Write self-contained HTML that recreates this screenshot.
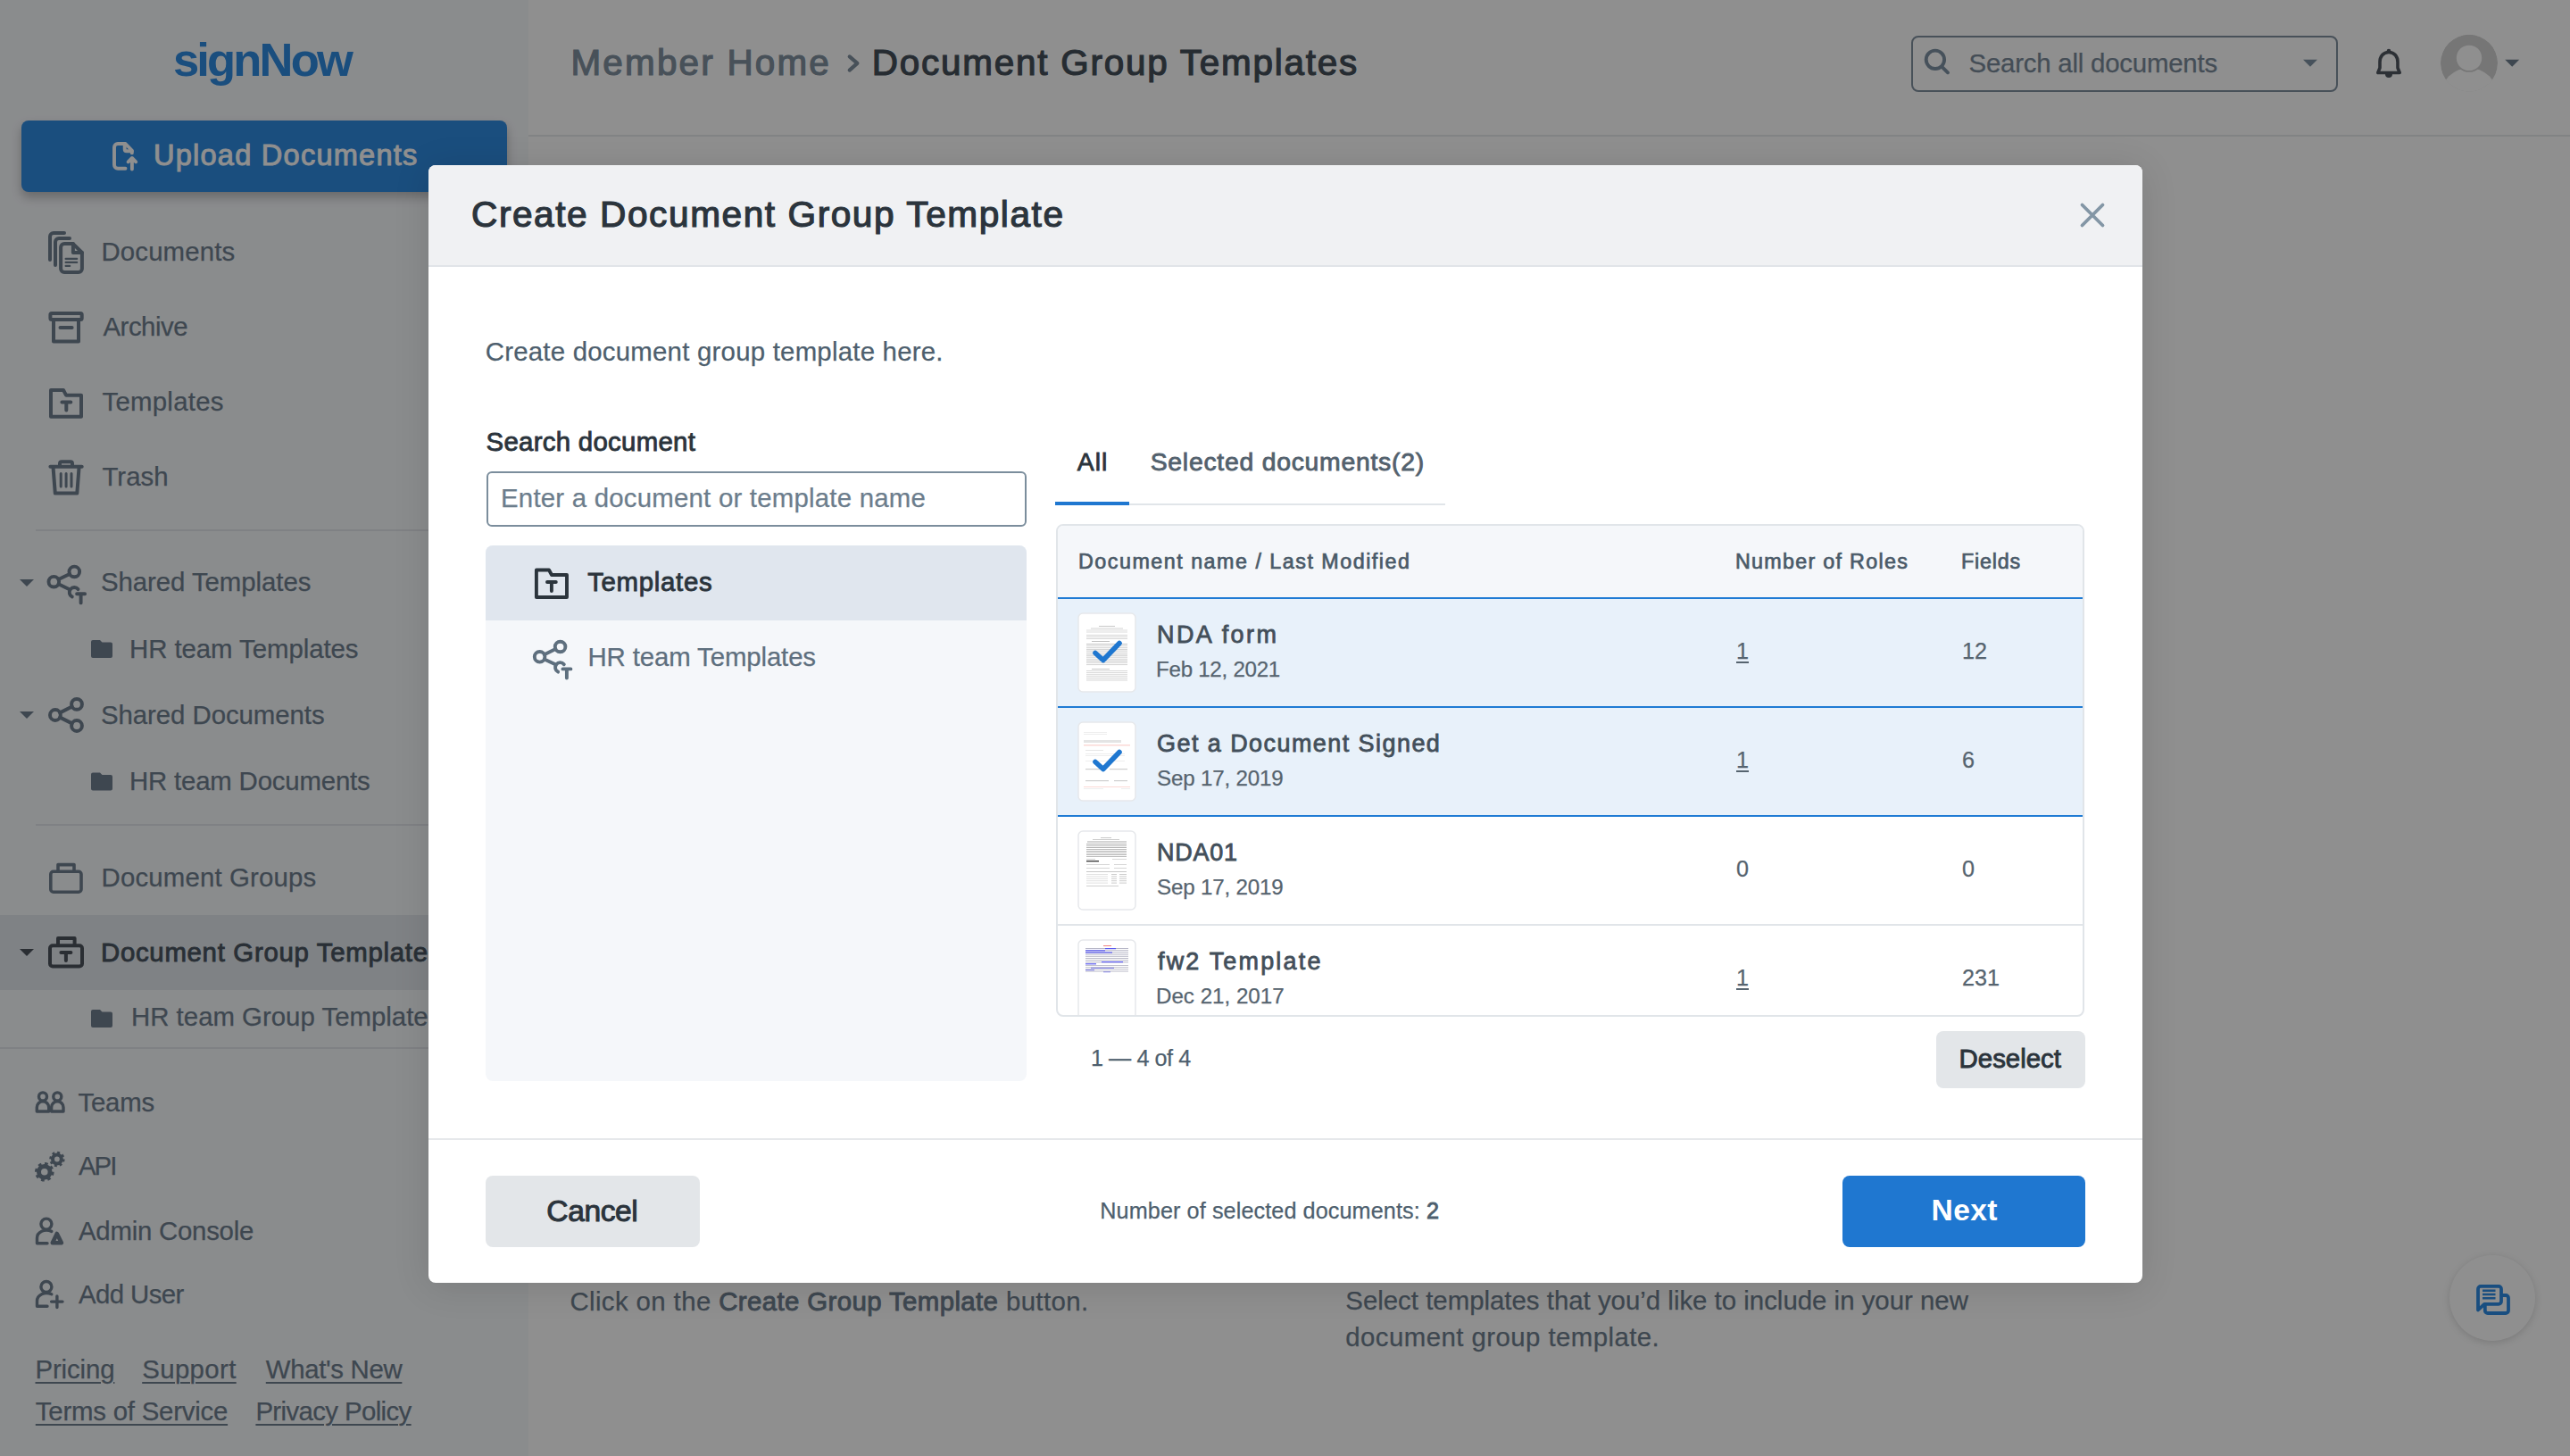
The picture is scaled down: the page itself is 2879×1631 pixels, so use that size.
<!DOCTYPE html><html><head><meta charset="utf-8"><style>
*{margin:0;padding:0;box-sizing:border-box}
html,body{width:2879px;height:1631px;overflow:hidden;background:#fff;font-family:"Liberation Sans",sans-serif}
.t{position:absolute;white-space:nowrap}
.t b{font-weight:400;-webkit-text-stroke-width:0.9px}
.hr{position:absolute;height:2px;background:#e3e7eb}
#sidebar{position:absolute;left:0;top:0;width:592px;height:1631px;background:#f7f9fc}
#upload{position:absolute;left:24px;top:135px;width:544px;height:80px;border-radius:8px;background:#2f8be1;box-shadow:0 6px 12px rgba(0,0,0,.25)}
#selrow{position:absolute;left:0;top:1025px;width:592px;height:84px;background:#e3e8ee}
#gsearch{position:absolute;left:2141px;top:39.5px;width:478px;height:63px;border:2px solid #80909f;border-radius:8px}
#chat{position:absolute;left:2744px;top:1406px;width:96px;height:96px;border-radius:50%;background:#fff;box-shadow:0 2px 8px rgba(0,0,0,.15)}
#overlay{position:absolute;left:0;top:0;width:2879px;height:1631px;background:rgba(0,0,0,.44)}
#modal{position:absolute;left:0;top:0;width:2879px;height:1631px}
#mbox{position:absolute;left:480px;top:185px;width:1920px;height:1252px;border-radius:8px;background:#fff;box-shadow:0 4px 40px rgba(0,0,0,.12)}
#mhead{position:absolute;left:480px;top:185px;width:1920px;height:114px;border-radius:8px 8px 0 0;background:#f0f1f3;border-bottom:2px solid #e1e4e8}
#minput{position:absolute;left:545px;top:528px;width:605px;height:62px;border:2px solid #7b8d9c;border-radius:6px}
#lpanel{position:absolute;left:544px;top:611px;width:606px;height:600px;border-radius:8px;background:#f5f7fa;overflow:hidden}
#lsel{position:absolute;left:0;top:0;width:606px;height:84px;background:#e0e6ee}
#table{position:absolute;left:1183px;top:587px;width:1152px;height:552px;border:2px solid #e1e5e9;border-radius:8px;overflow:hidden;background:#fff}
#desel{position:absolute;left:2169px;top:1155px;width:167px;height:64px;border-radius:8px;background:#e3e6e9}
#cancel{position:absolute;left:544px;top:1317px;width:240px;height:80px;border-radius:8px;background:#e3e6e9}
#next{position:absolute;left:2064px;top:1317px;width:272px;height:80px;border-radius:8px;background:#1f77d0}
</style></head><body>
<div id="sidebar"></div><div id="logo" class="t" style="left:194.0px;top:41.2px;font-size:52.5px;line-height:52.5px;color:#2f8be1;font-weight:700;letter-spacing:-2.834px;">signNow</div><div id="upload"></div><div id="upl" class="t" style="left:172.0px;top:157.9px;font-size:32.55px;line-height:32.55px;color:#ffffff;font-weight:400;-webkit-text-stroke-width:0.98px;letter-spacing:1.233px;">Upload Documents</div><div id="nDocs" class="t" style="left:113.5px;top:267.0px;font-size:29.4px;line-height:29.4px;color:#6f7f8f;font-weight:400;-webkit-text-stroke-width:0.25px;letter-spacing:0.125px;">Documents</div><div id="nArch" class="t" style="left:115.5px;top:351.0px;font-size:29.4px;line-height:29.4px;color:#6f7f8f;font-weight:400;-webkit-text-stroke-width:0.25px;letter-spacing:-0.500px;">Archive</div><div id="nTpl" class="t" style="left:114.5px;top:434.7px;font-size:29.4px;line-height:29.4px;color:#6f7f8f;font-weight:400;-webkit-text-stroke-width:0.25px;letter-spacing:0.250px;">Templates</div><div id="nTrash" class="t" style="left:114.5px;top:518.7px;font-size:29.4px;line-height:29.4px;color:#6f7f8f;font-weight:400;-webkit-text-stroke-width:0.25px;letter-spacing:0.000px;">Trash</div><div class="hr" style="left:40px;top:593px;width:552px"></div><div id="nST" class="t" style="left:113.0px;top:637.3px;font-size:29.4px;line-height:29.4px;color:#6f7f8f;font-weight:400;-webkit-text-stroke-width:0.25px;letter-spacing:-0.066px;">Shared Templates</div><div id="nHRT" class="t" style="left:145.0px;top:711.5px;font-size:29.4px;line-height:29.4px;color:#6f7f8f;font-weight:400;-webkit-text-stroke-width:0.25px;letter-spacing:-0.062px;">HR team Templates</div><div id="nSD" class="t" style="left:113.0px;top:785.7px;font-size:29.4px;line-height:29.4px;color:#6f7f8f;font-weight:400;-webkit-text-stroke-width:0.25px;letter-spacing:-0.067px;">Shared Documents</div><div id="nHRD" class="t" style="left:145.0px;top:859.9px;font-size:29.4px;line-height:29.4px;color:#6f7f8f;font-weight:400;-webkit-text-stroke-width:0.25px;letter-spacing:-0.188px;">HR team Documents</div><div class="hr" style="left:40px;top:923px;width:552px"></div><div id="nDG" class="t" style="left:113.6px;top:967.9px;font-size:29.4px;line-height:29.4px;color:#6f7f8f;font-weight:400;-webkit-text-stroke-width:0.25px;letter-spacing:0.143px;">Document Groups</div><div id="selrow"></div><div id="nDGT" class="t" style="left:113.0px;top:1051.5px;font-size:29.4px;line-height:29.4px;color:#4a5560;font-weight:400;-webkit-text-stroke-width:0.88px;letter-spacing:0.695px;">Document Group Templates</div><div id="nHRG" class="t" style="left:147px;top:1124.3px;font-size:29.4px;line-height:29.4px;color:#6f7f8f;font-weight:400;-webkit-text-stroke-width:0.25px;letter-spacing:0.000px;">HR team Group Templates</div><div class="hr" style="left:0px;top:1173px;width:592px"></div><div id="nTeams" class="t" style="left:87.4px;top:1219.5px;font-size:29.4px;line-height:29.4px;color:#6f7f8f;font-weight:400;-webkit-text-stroke-width:0.25px;letter-spacing:-0.200px;">Teams</div><div id="nAPI" class="t" style="left:88.0px;top:1291.3px;font-size:29.4px;line-height:29.4px;color:#6f7f8f;font-weight:400;-webkit-text-stroke-width:0.25px;letter-spacing:-2.000px;">API</div><div id="nAdm" class="t" style="left:88.0px;top:1363.9px;font-size:29.4px;line-height:29.4px;color:#6f7f8f;font-weight:400;-webkit-text-stroke-width:0.25px;letter-spacing:-0.250px;">Admin Console</div><div id="nAdd" class="t" style="left:88.0px;top:1435.3px;font-size:29.4px;line-height:29.4px;color:#6f7f8f;font-weight:400;-webkit-text-stroke-width:0.25px;letter-spacing:-0.587px;">Add User</div><div id="lPr" class="t" style="left:39.5px;top:1519.0px;font-size:29.4px;line-height:29.4px;color:#6f7f8f;font-weight:400;-webkit-text-stroke-width:0.25px;letter-spacing:-0.136px;text-decoration:underline;text-underline-offset:4px;text-decoration-thickness:2px;">Pricing</div><div id="lSu" class="t" style="left:159.20999999999998px;top:1519.0px;font-size:29.4px;line-height:29.4px;color:#6f7f8f;font-weight:400;-webkit-text-stroke-width:0.25px;letter-spacing:0.364px;text-decoration:underline;text-underline-offset:4px;text-decoration-thickness:2px;">Support</div><div id="lWN" class="t" style="left:297.8px;top:1519.0px;font-size:29.4px;line-height:29.4px;color:#6f7f8f;font-weight:400;-webkit-text-stroke-width:0.25px;letter-spacing:-0.333px;text-decoration:underline;text-underline-offset:4px;text-decoration-thickness:2px;">What's New</div><div id="lTos" class="t" style="left:39.8px;top:1566.3px;font-size:29.4px;line-height:29.4px;color:#6f7f8f;font-weight:400;-webkit-text-stroke-width:0.25px;letter-spacing:-0.223px;text-decoration:underline;text-underline-offset:4px;text-decoration-thickness:2px;">Terms of Service</div><div id="lPP" class="t" style="left:286.4px;top:1566.3px;font-size:29.4px;line-height:29.4px;color:#6f7f8f;font-weight:400;-webkit-text-stroke-width:0.25px;letter-spacing:-0.621px;text-decoration:underline;text-underline-offset:4px;text-decoration-thickness:2px;">Privacy Policy</div><div class="hr" style="left:592px;top:151px;width:2287px;background:#e6e9ec"></div><div id="bcMH" class="t" style="left:639.5px;top:50.0px;font-size:40.43px;line-height:40.43px;color:#80909f;font-weight:400;-webkit-text-stroke-width:1.21px;letter-spacing:2.200px;">Member Home</div><div id="bcDG" class="t" style="left:976.8px;top:50.0px;font-size:40.43px;line-height:40.43px;color:#454f59;font-weight:400;-webkit-text-stroke-width:1.21px;letter-spacing:1.783px;">Document Group Templates</div><div id="gsearch"></div><div id="gsTxt" class="t" style="left:2205.5px;top:55.8px;font-size:29.4px;line-height:29.4px;color:#7a8a99;font-weight:400;-webkit-text-stroke-width:0.25px;letter-spacing:-0.211px;">Search all documents</div><div id="mClick" class="t" style="left:638.4px;top:1443.3px;font-size:29.4px;line-height:29.4px;color:#6f7f8f;font-weight:400;-webkit-text-stroke-width:0.25px;letter-spacing:0.390px;">Click on the <b>Create Group Template</b> button.</div><div id="mSel1" class="t" style="left:1507.3px;top:1442.3px;font-size:29.4px;line-height:29.4px;color:#6f7f8f;font-weight:400;-webkit-text-stroke-width:0.25px;letter-spacing:0.000px;">Select templates that you’d like to include in your new</div><div id="mSel2" class="t" style="left:1507.3px;top:1483.3px;font-size:29.4px;line-height:29.4px;color:#6f7f8f;font-weight:400;-webkit-text-stroke-width:0.25px;letter-spacing:0.435px;">document group template.</div><div id="chat"></div><svg id="psvg" width="2879" height="1631" viewBox="0 0 2879 1631" style="position:absolute;left:0;top:0">
<g stroke="#6f7f8f" stroke-width="4" fill="none" stroke-linecap="round" stroke-linejoin="round">
 <path d="M56 291 V265 a4 4 0 0 1 4-4 H72"/>
 <path d="M62 297 V271 a4 4 0 0 1 4-4 H78"/>
 <path d="M81.9 273.1 H72.1 a4 4 0 0 0 -4 4 V300.9 a4 4 0 0 0 4 4 H87.9 a4 4 0 0 0 4-4 V283 Z"/>
 <path d="M81.9 273.1 V282.9 H91.9"/>
 <path d="M73.6 289.9 H86.2 M73.6 293.9 H86.2 M73.6 297.9 H78.2" stroke-width="2.2"/>
 <rect x="56.4" y="351" width="35.3" height="7" rx="1.5"/>
 <path d="M60 359 V382.6 H88 V359"/>
 <path d="M67.5 367 H80.6"/>
 <path d="M57 466.7 V436.9 H71 L74 442.7 H91 V466.7 Z"/>
 <path d="M69.4 450.4 H79.3 M74.3 450.4 V459.5"/>
 <path d="M56.4 522.8 H91.7"/>
 <path d="M67 522 V519.3 a2 2 0 0 1 2-2 H79 a2 2 0 0 1 2 2 V522"/>
 <path d="M59.5 523 L61.8 552.6 H86.3 L88.6 523"/>
 <path d="M68.2 530.5 V545 M74.1 530.5 V545 M80 530.5 V545" stroke-width="3"/>
 <circle cx="61.9" cy="801" r="5.9"/><circle cx="86" cy="788.9" r="5.9"/><circle cx="86" cy="813" r="5.9"/>
 <path d="M67.2 798.4 L80.7 791.5 M67.2 803.6 L80.7 810.4"/>
 <path d="M65 975 V968.6 H83 V975" stroke-width="3.6"/>
 <rect x="56.8" y="976.3" width="34.2" height="22.9" rx="3" stroke-width="3.6"/>
</g>
<g transform="translate(52.3,631.7)" stroke="#6f7f8f" stroke-width="3.9" fill="none" stroke-linecap="round"><circle cx="8" cy="20" r="5.8"/><circle cx="31" cy="8.7" r="5.8"/><path d="M13.2 17.4 L25.8 11.3 M13.2 22.6 L25 28.2"/><path d="M35.2 28.4 A5.5 5.5 0 1 0 28.5 36.8"/><path d="M33.8 33.6 H42.8 M38.3 33.6 V43.7"/></g>
<path d="M22 649 H38 L30.0 657 Z" fill="#6f7f8f"/><path d="M22 797 H38 L30.0 805 Z" fill="#6f7f8f"/><path d="M22 1063 H38 L30.0 1071 Z" fill="#4b525b"/>
<path d="M102 719 a2 2 0 0 1 2-2 H112 L114.5 719.5 H124 a2 2 0 0 1 2 2 V735 a2 2 0 0 1 -2 2 H104 a2 2 0 0 1 -2-2 Z" fill="#6f7f8f"/><path d="M102 867.4 a2 2 0 0 1 2-2 H112 L114.5 867.9 H124 a2 2 0 0 1 2 2 V883.4 a2 2 0 0 1 -2 2 H104 a2 2 0 0 1 -2-2 Z" fill="#6f7f8f"/><path d="M102 1133 a2 2 0 0 1 2-2 H112 L114.5 1133.5 H124 a2 2 0 0 1 2 2 V1149 a2 2 0 0 1 -2 2 H104 a2 2 0 0 1 -2-2 Z" fill="#6f7f8f"/>
<g stroke="#4b525b" stroke-width="4" fill="none" stroke-linecap="round" stroke-linejoin="round">
 <path d="M65 1058 V1051 H83.6 V1058"/>
 <rect x="56" y="1059.3" width="36" height="23.2" rx="3"/>
 <path d="M68.4 1066.9 H79.4 M73.9 1066.9 V1076"/>
</g>
<g stroke="#6f7f8f" stroke-width="3.4" fill="none" stroke-linecap="round" stroke-linejoin="round">
 <circle cx="48" cy="1228.4" r="4.5"/><circle cx="64.3" cy="1228.4" r="4.5"/>
 <path d="M41.3 1245 V1240.5 a6.7 6.7 0 0 1 13.4 0 V1245 Z"/>
 <path d="M57.6 1245 V1240.5 a6.7 6.7 0 0 1 13.4 0 V1245 Z"/>
 <circle cx="51.9" cy="1371.1" r="6"/>
 <path d="M57.8 1379.4 C 50 1376 41.5 1380 41.5 1387 V1392.8 H53"/>
 <path d="M58.8 1392.3 L63.8 1382 L68.9 1392.3 Z" stroke-width="4.6"/>
 <circle cx="51.9" cy="1441.5" r="6"/>
 <path d="M57.8 1449.8 C 50 1446.4 41.5 1450.4 41.5 1457.4 V1463.2 H53"/>
 <path d="M57.6 1458.1 H70 M63.9 1452 V1464.5"/>
</g>
<g fill="none" stroke="#6f7f8f">
 <circle cx="49.8" cy="1312.8" r="6.3" stroke-width="5"/>
 <circle cx="49.8" cy="1312.8" r="9" stroke-width="3.6" stroke-dasharray="3.53 3.53"/>
 <circle cx="63.9" cy="1298.5" r="4.9" stroke-width="4"/>
 <circle cx="63.9" cy="1298.5" r="7.2" stroke-width="3" stroke-dasharray="2.83 2.83"/>
</g>
<!-- header -->
<path d="M951.7 63.4 L960.4 70.9 L951.7 78.6" stroke="#80909f" stroke-width="4.1" fill="none" stroke-linecap="round" stroke-linejoin="round"/>
<g stroke="#7e91a3" stroke-width="3.9" fill="none" stroke-linecap="round">
 <circle cx="2167.9" cy="66.8" r="10.2"/><path d="M2175.7 75.2 L2182 81.3"/>
</g>
<path d="M2580 66.8 H2596 L2588.0 74.8 Z" fill="#7e91a3"/>
<path d="M2806.2 66.8 H2822.2 L2814.2 74.8 Z" fill="#6f7f8f"/>
<g stroke="#4f565f" stroke-width="3.6" fill="none" stroke-linejoin="round">
 <path d="M2676 58.5 C2669.5 58.5 2666 63.5 2666 69.5 V76 L2663.8 81.5 H2688.2 L2686 76 V69.5 C2686 63.5 2682.5 58.5 2676 58.5 Z"/>
</g>
<circle cx="2676" cy="57" r="2.3" fill="#4f565f"/>
<path d="M2672 83 A4 4 0 0 0 2680 83 Z" fill="#4f565f"/>
<defs><clipPath id="avc"><circle cx="2766" cy="70.7" r="32"/></clipPath></defs>
<g clip-path="url(#avc)">
 <circle cx="2766" cy="70.7" r="32" fill="#d2d2d2"/>
 <circle cx="2766" cy="108" r="32" fill="#fff"/>
 <circle cx="2766" cy="64.9" r="14.2" fill="#fff" stroke="#d2d2d2" stroke-width="3.5"/>
 <circle cx="2766" cy="64.9" r="14.2" fill="#fff"/>
</g>
<!-- upload icon -->
<g stroke="#fff" stroke-width="3.9" fill="none" stroke-linecap="round" stroke-linejoin="round">
 <path d="M140.5 188.8 H132 a4 4 0 0 1 -4-4 V165 a4 4 0 0 1 4-4 H140.5 L147.8 168.5 V171.4"/>
 <path d="M139.7 161 V167.3 a2 2 0 0 0 2 2 H147.8"/>
 <path d="M147.9 177.5 V189.5 M143.6 181.3 L147.9 177 L152.2 181.3"/>
</g>
<!-- chat -->
<g stroke="#2e8be4" stroke-width="3.8" fill="none" stroke-linecap="round" stroke-linejoin="round">
 <path d="M2776 1467.5 V1443.9 a3 3 0 0 1 3-3 H2799 a3 3 0 0 1 3 3 V1457.8 a3 3 0 0 1 -3 3 H2783 Z"/>
 <path d="M2802.5 1451 H2807 a3 3 0 0 1 3 3 V1468 a3 3 0 0 1 -3 3 H2786.8 a3 3 0 0 1 -3-3 V1461.5"/>
 <path d="M2781 1445.8 H2795.5 M2781 1450 H2795.5 M2781 1454.2 H2795.5" stroke-width="2.4" stroke-linecap="butt"/>
</g>
</svg><div id="overlay"></div>
<div id="modal"><div id="mbox"></div>
<div id="mhead"></div><div id="mTitle" class="t" style="left:528.0px;top:219.8px;font-size:40.64px;line-height:40.64px;color:#2b343c;font-weight:400;-webkit-text-stroke-width:1.22px;letter-spacing:1.552px;">Create Document Group Template</div><div id="mSub" class="t" style="left:543.71px;top:379.3px;font-size:29.4px;line-height:29.4px;color:#4e5f6e;font-weight:400;-webkit-text-stroke-width:0.25px;letter-spacing:0.228px;">Create document group template here.</div><div id="mSrchL" class="t" style="left:544.5px;top:479.9px;font-size:29.4px;line-height:29.4px;color:#2b343c;font-weight:400;-webkit-text-stroke-width:0.88px;letter-spacing:0.285px;">Search document</div><div id="minput"></div><div id="mPh" class="t" style="left:561.0px;top:542.8px;font-size:29.4px;line-height:29.4px;color:#6c7d8c;font-weight:400;-webkit-text-stroke-width:0.25px;letter-spacing:0.219px;">Enter a document or template name</div><div id="lpanel"><div id="lsel"></div></div><svg id="msvg" width="2879" height="1631" viewBox="0 0 2879 1631" style="position:absolute;left:0;top:0">
<path d="M2332.5 229.5 L2355.5 252.5 M2355.5 229.5 L2332.5 252.5" stroke="#8396a5" stroke-width="3.8" fill="none" stroke-linecap="round"/>
<g stroke="#2b343c" stroke-width="3.9" fill="none" stroke-linecap="round" stroke-linejoin="round">
 <path d="M600.9 669 V638.5 H615 L618 644 H635 V669 Z"/>
 <path d="M613 652 H622.8 M617.9 652 V662"/>
</g>
<g transform="translate(596.6,715.8)" stroke="#5e6f7e" stroke-width="3.9" fill="none" stroke-linecap="round"><circle cx="8" cy="20" r="5.8"/><circle cx="31" cy="8.7" r="5.8"/><path d="M13.2 17.4 L25.8 11.3 M13.2 22.6 L25 28.2"/><path d="M35.2 28.4 A5.5 5.5 0 1 0 28.5 36.8"/><path d="M33.8 33.6 H42.8 M38.3 33.6 V43.7"/></g>
</svg><div id="lpTpl" class="t" style="left:658.21px;top:637.3px;font-size:29.4px;line-height:29.4px;color:#2b343c;font-weight:400;-webkit-text-stroke-width:0.88px;letter-spacing:0.686px;">Templates</div><div id="lpHR" class="t" style="left:658.5px;top:721.3px;font-size:29.4px;line-height:29.4px;color:#5e6f7e;font-weight:400;-webkit-text-stroke-width:0.25px;letter-spacing:-0.124px;">HR team Templates</div><div id="tabAll" class="t" style="left:1206.8px;top:503.2px;font-size:28.35px;line-height:28.35px;color:#2b343c;font-weight:400;-webkit-text-stroke-width:0.85px;letter-spacing:1.000px;">All</div><div id="tabSel" class="t" style="left:1288.71px;top:503.2px;font-size:28.35px;line-height:28.35px;color:#53616d;font-weight:400;-webkit-text-stroke-width:0.85px;letter-spacing:0.750px;">Selected documents(2)</div><div style="position:absolute;left:1265px;top:564px;width:354px;height:2px;background:#e1e5e9"></div><div style="position:absolute;left:1182px;top:562px;width:83px;height:4px;background:#1f77d0"></div><div id="table"><div style="position:absolute;left:0;top:0;width:1148px;height:81px;background:#f5f7fa"></div><div style="position:absolute;left:0;top:80px;width:1148px;height:2px;background:#1f7bd4"></div><div style="position:absolute;left:0;top:82px;width:1148px;height:120px;background:#e8f1fa"></div><div style="position:absolute;left:0;top:202px;width:1148px;height:2px;background:#1f7bd4"></div><div style="position:absolute;left:0;top:204px;width:1148px;height:120px;background:#e8f1fa"></div><div style="position:absolute;left:0;top:324px;width:1148px;height:2px;background:#1f7bd4"></div><div style="position:absolute;left:0;top:446px;width:1148px;height:2px;background:#e1e5e9"></div><svg width="2879" height="1631" style="position:absolute;left:-1185px;top:-589px"><rect x="1208" y="687" width="64" height="88" rx="5" fill="#fff" stroke="#e6e8eb" stroke-width="1.5"/><rect x="1231" y="701" width="18" height="1.0" fill="#c8c8c8"/><rect x="1222" y="703.5" width="36" height="1.0" fill="#d4d4d4"/><rect x="1217" y="705.5" width="46" height="1.0" fill="#dedede"/><rect x="1217" y="707.5" width="46" height="1.0" fill="#dedede"/><rect x="1217" y="711" width="46" height="1.0" fill="#d6d6d6"/><rect x="1217" y="713" width="46" height="1.0" fill="#d6d6d6"/><rect x="1217" y="715" width="46" height="1.0" fill="#d6d6d6"/><rect x="1223" y="718" width="20" height="1.0" fill="#c0c0c0"/><rect x="1217" y="721.0" width="46" height="1.0" fill="#c4c4c4"/><rect x="1217" y="723.1" width="46" height="1.0" fill="#d2d2d2"/><rect x="1217" y="725.2" width="46" height="1.0" fill="#d2d2d2"/><rect x="1217" y="727.3" width="46" height="1.0" fill="#c4c4c4"/><rect x="1217" y="729.4" width="46" height="1.0" fill="#d2d2d2"/><rect x="1217" y="731.5" width="46" height="1.0" fill="#d2d2d2"/><rect x="1217" y="733.6" width="46" height="1.0" fill="#c4c4c4"/><rect x="1217" y="735.7" width="46" height="1.0" fill="#d2d2d2"/><rect x="1217" y="737.8" width="46" height="1.0" fill="#d2d2d2"/><rect x="1217" y="739.9" width="46" height="1.0" fill="#c4c4c4"/><rect x="1217" y="742.0" width="46" height="1.0" fill="#d2d2d2"/><rect x="1217" y="744.1" width="46" height="1.0" fill="#d2d2d2"/><rect x="1223" y="749" width="20" height="1.0" fill="#c8c8c8"/><rect x="1217" y="751.0" width="46" height="1.0" fill="#d8d8d8"/><rect x="1217" y="753.1" width="46" height="1.0" fill="#d8d8d8"/><rect x="1217" y="755.2" width="46" height="1.0" fill="#d8d8d8"/><rect x="1217" y="757.3" width="46" height="1.0" fill="#d8d8d8"/><rect x="1217" y="759.4" width="46" height="1.0" fill="#d8d8d8"/><rect x="1217" y="761.5" width="46" height="1.0" fill="#d8d8d8"/><path d="M1227 731.5 L1235.8 739.5 L1254 720.5" stroke="#1f77d0" stroke-width="5.6" fill="none" stroke-linecap="round" stroke-linejoin="round"/><rect x="1208" y="809" width="64" height="88" rx="5" fill="#fff" stroke="#e6e8eb" stroke-width="1.5"/><rect x="1214" y="820" width="26" height="1.0" fill="#eeeeee"/><rect x="1214" y="822" width="26" height="1.0" fill="#eeeeee"/><rect x="1214" y="829" width="42" height="3" fill="#e4e4e4"/><rect x="1214" y="834" width="52" height="1.5" fill="#fbd9d6"/><rect x="1216" y="840" width="20" height="1.0" fill="#e6e6e6"/><rect x="1216" y="844" width="44" height="1.0" fill="#eeeeee"/><rect x="1216" y="846" width="44" height="1.0" fill="#eeeeee"/><rect x="1216" y="852" width="44" height="1.0" fill="#eeeeee"/><rect x="1216" y="861" width="22" height="1.2" fill="#cfcfcf"/><rect x="1243" y="861" width="20" height="1.2" fill="#cfcfcf"/><rect x="1216" y="874" width="26" height="1.2" fill="#cfcfcf"/><rect x="1248" y="874" width="15" height="1.2" fill="#cfcfcf"/><rect x="1214" y="881" width="52" height="1" fill="#fbd9d6"/><rect x="1214" y="883" width="22" height="1.0" fill="#eeeeee"/><rect x="1256" y="883" width="10" height="1.0" fill="#eeeeee"/><path d="M1227 853.5 L1235.8 861.5 L1254 842.5" stroke="#1f77d0" stroke-width="5.6" fill="none" stroke-linecap="round" stroke-linejoin="round"/><rect x="1208" y="931" width="64" height="88" rx="5" fill="#fff" stroke="#e6e8eb" stroke-width="1.5"/><rect x="1233" y="938" width="12" height="1.0" fill="#c8c8c8"/><rect x="1224" y="940" width="30" height="1.0" fill="#cccccc"/><rect x="1218" y="942.5" width="44" height="1.0" fill="#aaaaaa"/><rect x="1217" y="945" width="45" height="1.0" fill="#b0b0b0"/><rect x="1217" y="947" width="45" height="1.0" fill="#bdbdbd"/><rect x="1217" y="949" width="45" height="1.0" fill="#b0b0b0"/><rect x="1217" y="951" width="45" height="1.0" fill="#bdbdbd"/><rect x="1217" y="953" width="45" height="1.0" fill="#b0b0b0"/><rect x="1217" y="955" width="45" height="1.0" fill="#bdbdbd"/><rect x="1217" y="957" width="45" height="1.0" fill="#b0b0b0"/><rect x="1217" y="959" width="45" height="1.0" fill="#bdbdbd"/><rect x="1217" y="962" width="10" height="1.0" fill="#d0d0d0"/><rect x="1246" y="962" width="16" height="1.0" fill="#d8d8d8"/><rect x="1217" y="964" width="14" height="1.3" fill="#333333"/><rect x="1217" y="968" width="26" height="1.0" fill="#d6d6d6"/><rect x="1248" y="968" width="14" height="1.0" fill="#d6d6d6"/><rect x="1217" y="972" width="26" height="1.0" fill="#d6d6d6"/><rect x="1248" y="972" width="14" height="1.0" fill="#d6d6d6"/><rect x="1217" y="976" width="45" height="1.0" fill="#c8c8c8"/><rect x="1217" y="979.0" width="24" height="1.0" fill="#e2e2e2"/><rect x="1245" y="979.0" width="6" height="1.0" fill="#cccccc"/><rect x="1254" y="979.0" width="8" height="1.0" fill="#cccccc"/><rect x="1217" y="981.4" width="24" height="1.0" fill="#e2e2e2"/><rect x="1245" y="981.4" width="6" height="1.0" fill="#cccccc"/><rect x="1254" y="981.4" width="8" height="1.0" fill="#cccccc"/><rect x="1217" y="983.8" width="24" height="1.0" fill="#e2e2e2"/><rect x="1245" y="983.8" width="6" height="1.0" fill="#cccccc"/><rect x="1254" y="983.8" width="8" height="1.0" fill="#cccccc"/><rect x="1217" y="986.2" width="24" height="1.0" fill="#e2e2e2"/><rect x="1245" y="986.2" width="6" height="1.0" fill="#cccccc"/><rect x="1254" y="986.2" width="8" height="1.0" fill="#cccccc"/><rect x="1217" y="988.6" width="24" height="1.0" fill="#e2e2e2"/><rect x="1245" y="988.6" width="6" height="1.0" fill="#cccccc"/><rect x="1254" y="988.6" width="8" height="1.0" fill="#cccccc"/><rect x="1217" y="992" width="36" height="1.0" fill="#d0d0d0"/><rect x="1208" y="1053" width="64" height="88" rx="5" fill="#fff" stroke="#e6e8eb" stroke-width="1.5"/><rect x="1236" y="1059" width="9" height="1.0" fill="#f08080"/><rect x="1216" y="1062.0" width="48" height="1.0" fill="#b8b8c8"/><rect x="1216" y="1064.2" width="48" height="1.0" fill="#b8b8c8"/><rect x="1216" y="1066.4" width="48" height="1.0" fill="#b8b8c8"/><rect x="1216" y="1068.6" width="48" height="1.0" fill="#b8b8c8"/><rect x="1216" y="1070.8" width="48" height="1.0" fill="#b8b8c8"/><rect x="1216" y="1073.0" width="48" height="1.0" fill="#b8b8c8"/><rect x="1216" y="1075.2" width="48" height="1.0" fill="#b8b8c8"/><rect x="1216" y="1077.4" width="48" height="1.0" fill="#b8b8c8"/><rect x="1238" y="1062" width="12" height="1.2" fill="#5b5bf0"/><rect x="1216" y="1064.2" width="22" height="1.2" fill="#5b5bf0"/><rect x="1216" y="1066.4" width="30" height="1.2" fill="#5b5bf0"/><rect x="1234" y="1077" width="24" height="1.2" fill="#5b5bf0"/><rect x="1216" y="1079.2" width="12" height="1.2" fill="#5b5bf0"/><rect x="1222" y="1083.6" width="26" height="1.2" fill="#5b5bf0"/><rect x="1216" y="1086" width="10" height="1.2" fill="#5b5bf0"/><rect x="1236" y="1088" width="8" height="1.2" fill="#5b5bf0"/><rect x="1216" y="1081.0" width="48" height="1.0" fill="#c0c0cc"/><rect x="1216" y="1083.2" width="48" height="1.0" fill="#c0c0cc"/><rect x="1216" y="1085.4" width="48" height="1.0" fill="#c0c0cc"/><rect x="1216" y="1087.6" width="48" height="1.0" fill="#c0c0cc"/></svg></div><div id="thName" class="t" style="left:1208.0px;top:617.5px;font-size:23.31px;line-height:23.31px;color:#4a5a68;font-weight:400;-webkit-text-stroke-width:0.70px;letter-spacing:1.499px;">Document name / Last Modified</div><div id="thRoles" class="t" style="left:1944.0px;top:617.5px;font-size:23.31px;line-height:23.31px;color:#4a5a68;font-weight:400;-webkit-text-stroke-width:0.70px;letter-spacing:1.286px;">Number of Roles</div><div id="thFields" class="t" style="left:2197.0px;top:617.5px;font-size:23.31px;line-height:23.31px;color:#4a5a68;font-weight:400;-webkit-text-stroke-width:0.70px;letter-spacing:0.800px;">Fields</div><div id="rN0" class="t" style="left:1296.0px;top:698.4px;font-size:26.98px;line-height:26.98px;color:#434f5a;font-weight:400;-webkit-text-stroke-width:0.81px;letter-spacing:2.429px;">NDA form</div><div id="rD0" class="t" style="left:1295.0px;top:737.8px;font-size:24.15px;line-height:24.15px;color:#56646f;font-weight:400;-webkit-text-stroke-width:0.25px;letter-spacing:-0.273px;">Feb 12, 2021</div><div id="rR0" class="t" style="left:1945px;top:717.3px;font-size:25.2px;line-height:25.2px;color:#56646f;font-weight:400;-webkit-text-stroke-width:0.25px;letter-spacing:0.000px;text-decoration:underline;text-underline-offset:3px;text-decoration-thickness:2px;">1</div><div id="rF0" class="t" style="left:2198px;top:717.3px;font-size:25.2px;line-height:25.2px;color:#56646f;font-weight:400;-webkit-text-stroke-width:0.25px;letter-spacing:0.000px;">12</div><div id="rN1" class="t" style="left:1296.0px;top:820.4px;font-size:26.98px;line-height:26.98px;color:#434f5a;font-weight:400;-webkit-text-stroke-width:0.81px;letter-spacing:1.450px;">Get a Document Signed</div><div id="rD1" class="t" style="left:1296.0px;top:859.8px;font-size:24.15px;line-height:24.15px;color:#56646f;font-weight:400;-webkit-text-stroke-width:0.25px;letter-spacing:-0.182px;">Sep 17, 2019</div><div id="rR1" class="t" style="left:1945px;top:839.3px;font-size:25.2px;line-height:25.2px;color:#56646f;font-weight:400;-webkit-text-stroke-width:0.25px;letter-spacing:0.000px;text-decoration:underline;text-underline-offset:3px;text-decoration-thickness:2px;">1</div><div id="rF1" class="t" style="left:2198px;top:839.3px;font-size:25.2px;line-height:25.2px;color:#56646f;font-weight:400;-webkit-text-stroke-width:0.25px;letter-spacing:0.000px;">6</div><div id="rN2" class="t" style="left:1296.0px;top:942.4px;font-size:26.98px;line-height:26.98px;color:#434f5a;font-weight:400;-webkit-text-stroke-width:0.81px;letter-spacing:0.750px;">NDA01</div><div id="rD2" class="t" style="left:1296.0px;top:981.8px;font-size:24.15px;line-height:24.15px;color:#56646f;font-weight:400;-webkit-text-stroke-width:0.25px;letter-spacing:-0.182px;">Sep 17, 2019</div><div id="rR2" class="t" style="left:1945px;top:961.3px;font-size:25.2px;line-height:25.2px;color:#56646f;font-weight:400;-webkit-text-stroke-width:0.25px;letter-spacing:0.000px;">0</div><div id="rF2" class="t" style="left:2198px;top:961.3px;font-size:25.2px;line-height:25.2px;color:#56646f;font-weight:400;-webkit-text-stroke-width:0.25px;letter-spacing:0.000px;">0</div><div id="rN3" class="t" style="left:1297.0px;top:1064.4px;font-size:26.98px;line-height:26.98px;color:#434f5a;font-weight:400;-webkit-text-stroke-width:0.81px;letter-spacing:2.182px;">fw2 Template</div><div id="rD3" class="t" style="left:1295.0px;top:1103.8px;font-size:24.15px;line-height:24.15px;color:#56646f;font-weight:400;-webkit-text-stroke-width:0.25px;letter-spacing:0.000px;">Dec 21, 2017</div><div id="rR3" class="t" style="left:1945px;top:1083.3px;font-size:25.2px;line-height:25.2px;color:#56646f;font-weight:400;-webkit-text-stroke-width:0.25px;letter-spacing:0.000px;text-decoration:underline;text-underline-offset:3px;text-decoration-thickness:2px;">1</div><div id="rF3" class="t" style="left:2198px;top:1083.3px;font-size:25.2px;line-height:25.2px;color:#56646f;font-weight:400;-webkit-text-stroke-width:0.25px;letter-spacing:0.000px;">231</div><div id="pag" class="t" style="left:1222.0px;top:1172.9px;font-size:25.2px;line-height:25.2px;color:#4e5f6e;font-weight:400;-webkit-text-stroke-width:0.25px;letter-spacing:-0.445px;">1 — 4 of 4</div><div id="desel"></div><div id="deTxt" class="t" style="left:2194.6px;top:1171.3px;font-size:29.4px;line-height:29.4px;color:#2b343c;font-weight:400;-webkit-text-stroke-width:0.88px;letter-spacing:0.000px;">Deselect</div><div class="hr" style="left:480px;top:1275px;width:1920px;background:#e6e8eb"></div><div id="cancel"></div><div id="caTxt" class="t" style="left:612.3px;top:1339.8px;font-size:33.6px;line-height:33.6px;color:#2b343c;font-weight:400;-webkit-text-stroke-width:1.01px;letter-spacing:-0.400px;">Cancel</div><div id="nsel" class="t" style="left:1232.3px;top:1343.9px;font-size:25.2px;line-height:25.2px;color:#4e5f6e;font-weight:400;-webkit-text-stroke-width:0.25px;letter-spacing:0.100px;">Number of selected documents: <b>2</b></div><div id="next"></div><div id="nxTxt" class="t" style="left:2163.6px;top:1338.5px;font-size:33.6px;line-height:33.6px;color:#ffffff;font-weight:700;letter-spacing:0.333px;">Next</div>
</div>
</body></html>
